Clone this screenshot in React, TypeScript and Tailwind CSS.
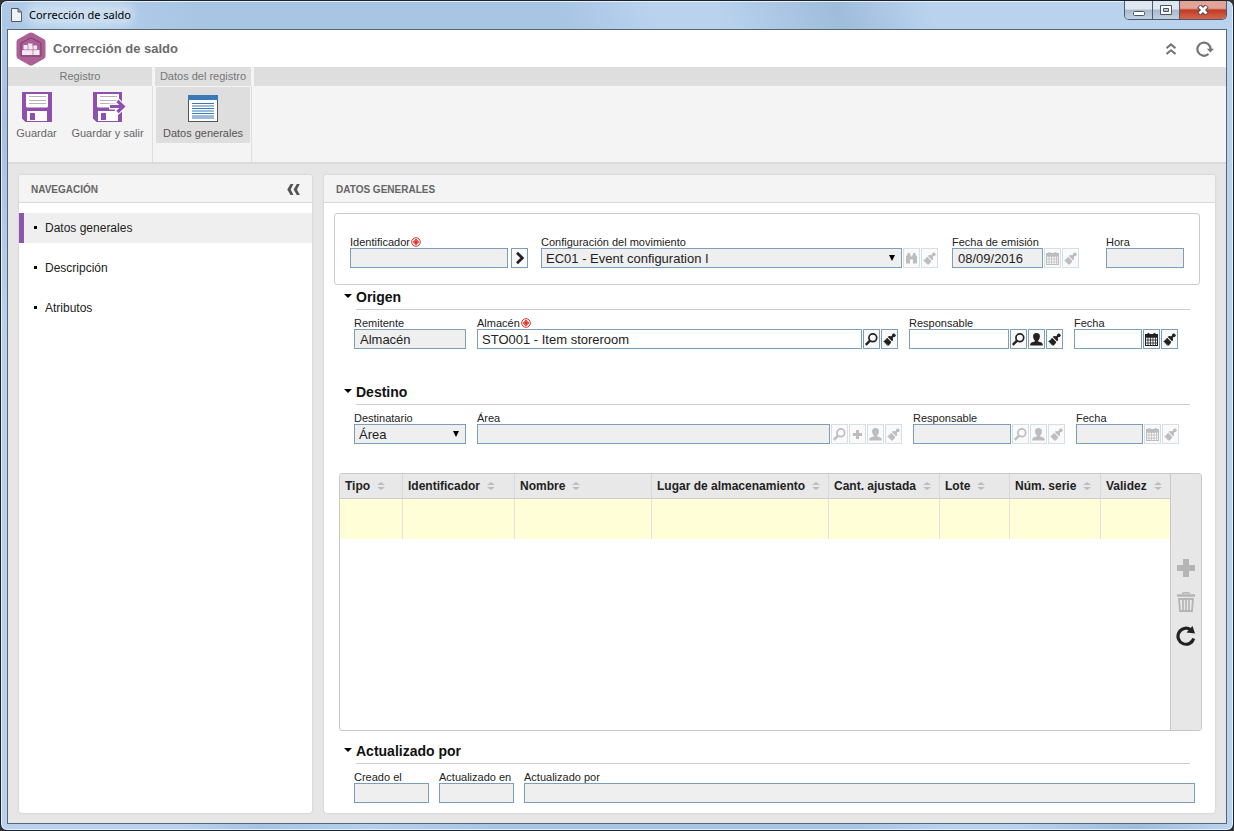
import React from 'react';

/* ---------- Icons ---------- */

function SearchIcon() {
  return (
    <svg viewBox="0 0 15 15" className="h-[15px] w-[15px] shrink-0" fill="none" stroke="currentColor">
      <circle cx="8.800" cy="5.800" r="3.900" strokeWidth="1.700" />
      <path d="M6 8.600 L1.800 12.800" strokeWidth="2.400" />
    </svg>
  );
}

function BrushIcon() {
  return (
    <svg viewBox="0 0 15 15" className="h-[15px] w-[15px] shrink-0" fill="currentColor">
      <path d="M12 1.200 L14 3.200 L12.800 5 L11.600 5 L10.800 5.900 L11.200 8.200 L10 9.200 L5.800 5 L6.800 4 L9.100 4.300 L10 3.500 L10.200 2.300 Z" />
      <path d="M5.100 5.700 L9.300 9.900 C8.600 11.600 7.400 13 5.700 14 L5.300 12.600 L4.300 12.900 L4 11.400 L2.800 11.500 L2.500 10.100 L1 9.600 C2.600 8.600 4 7.300 5.100 5.700 Z" />
    </svg>
  );
}

function UserIcon() {
  return (
    <svg viewBox="0 0 15 15" className="h-[15px] w-[15px] shrink-0" fill="currentColor">
      <path d="M7.500 1 C9.900 1 11 2.500 10.900 4.500 C10.800 6.300 10.200 7.700 9.200 8.400 V9.400 C11.800 10 13.800 10.400 13.800 13 V13.500 H1.200 V13 C1.200 10.400 3.200 10 5.800 9.400 V8.400 C4.800 7.700 4.200 6.300 4.100 4.500 C4 2.500 5.100 1 7.500 1 Z" />
    </svg>
  );
}

function CalendarIcon() {
  return (
    <svg viewBox="0 0 15 15" className="h-[15px] w-[15px] shrink-0" fill="none" stroke="currentColor">
      <rect x="1.500" y="2.500" width="12" height="11" />
      <path d="M1 3.500 H14 M1 5 H14" strokeWidth="1.400" />
      <path d="M4.500 1 V4 M10.500 1 V4" strokeWidth="1.800" />
      <path d="M4 5 V13 M6.500 5 V13 M9 5 V13 M11.500 5 V13 M1 8 H14 M1 11 H14" strokeWidth="0.800" />
    </svg>
  );
}

function BinocularsIcon() {
  return (
    <svg viewBox="0 0 15 15" className="h-[15px] w-[15px] shrink-0" fill="currentColor">
      <path d="M3.500 2 H6 V4 H6.800 V5.500 H8.200 V4 H9 V2 H11.500 V4 L13 5 V12.500 H9 V8.500 H6 V12.500 H2 V5 L3.500 4 Z" />
    </svg>
  );
}

function PlusIcon({ className }: { className: string }) {
  return (
    <svg viewBox="0 0 18 18" className={className} fill="currentColor">
      <path d="M6 0 h6 v6 h6 v6 h-6 v6 h-6 v-6 h-6 v-6 h6 Z" />
    </svg>
  );
}

function ChevronIcon() {
  return (
    <svg viewBox="0 0 10 14" className="h-3.5 w-2.5" fill="none" stroke="currentColor" strokeWidth="2.800">
      <path d="M2 1.800 L7.300 7 L2 12.200" />
    </svg>
  );
}

function RequiredIcon() {
  return (
    <svg viewBox="0 0 10 10" className="h-2.5 w-2.5">
      <circle cx="5" cy="5" r="4.300" fill="#fff" stroke="#e8281e" strokeWidth="1" />
      <path d="M5 2 V8 M2 5 H8" stroke="#e8281e" strokeWidth="1.600" />
      <path d="M3 3 L7 7 M7 3 L3 7" stroke="#e8281e" strokeWidth="0.700" />
    </svg>
  );
}

function FloppyIcon({ exit = false }: { exit?: boolean }) {
  return (
    <svg viewBox="0 0 33 30" className="h-[30px] w-[33px]">
      <path d="M0 0 H30 V30 H3.500 L0 26.500 Z" fill="#8e4fad" />
      <path d="M4 2 H26 V14 Q26 15.500 24.500 15.500 H5.500 Q4 15.500 4 14 Z" fill="#fff" />
      <path d="M7 4.500 H24 M7 8.500 H24 M7 11.500 H24" stroke="#b5b5b5" />
      <rect x="5" y="19" width="20" height="10" fill="#fff" />
      <rect x="8" y="21" width="5" height="7" fill="#8e4fad" />
      {exit && (
        <g>
          <path d="M29 0 H33 V30 H29 Z" fill="#f4f4f4" />
          <path d="M16 14.500 H26 M23.500 8.500 L30 14.500 L23.500 20.500" fill="none" stroke="#f8f8f8" strokeWidth="6" />
          <path d="M17 14.500 H30 M24.500 9 L30.200 14.500 L24.500 20" fill="none" stroke="#8e4fad" strokeWidth="3.200" />
        </g>
      )}
    </svg>
  );
}

function FormIcon() {
  return (
    <svg viewBox="0 0 30 27" className="h-[27px] w-[30px]">
      <rect x="0.500" y="0.500" width="29" height="26" fill="#fff" stroke="#555" />
      <rect width="30" height="5" fill="#3b78b8" />
      <path d="M4 8.500 H26 M4 11 H26 M4 13.500 H26 M4 16 H26 M4 18.500 H26 M4 21 H26 M4 23 H26" stroke="#3b78b8" strokeWidth="1.200" />
    </svg>
  );
}

function WarehouseIcon() {
  return (
    <svg viewBox="0 0 30 34" className="h-[34px] w-[30px]">
      <path d="M13 1 Q15 0 17 1 L28 7.300 Q29.500 8.200 29.500 10 V24 Q29.500 25.800 28 26.700 L17 33 Q15 34 13 33 L2 26.700 Q0.500 25.800 0.500 24 V10 Q0.500 8.200 2 7.300 Z" fill="#ac6096" />
      <path d="M5 24 V11 L15 5.800 L25 11 V24 Z" fill="none" stroke="#73406a" strokeWidth="1" />
      <path d="M7.500 13 h4.500 v-1.600 h4.500 v2 h4.500 v4.600 h2.500 v5 h-17.500 v-5 h1.500 Z" fill="#f3eaf1" />
      <path d="M6 17.800 H21 M17 13 V23 M12 13 V17.500" stroke="#ac6096" strokeWidth="0.700" />
    </svg>
  );
}

function TrashIcon() {
  return (
    <svg viewBox="0 0 18 20" className="h-5 w-[18px]" fill="none" stroke="currentColor">
      <path d="M5.500 2 Q5.500 0.800 7 0.800 H11 Q12.500 0.800 12.500 2" strokeWidth="1.400" />
      <path d="M0 3.500 H18" strokeWidth="2.600" />
      <path d="M2 7 L3 19 H15 L16 7 Z" strokeWidth="1.800" />
      <path d="M6 7 V18 M9 7 V18 M12 7 V18" strokeWidth="1.700" />
    </svg>
  );
}

function ReloadIcon() {
  return (
    <svg viewBox="0 0 20 20" className="h-5 w-5">
      <path d="M17.700 12.500 A8 8 0 1 1 14.500 3.600" fill="none" stroke="#222" strokeWidth="3.200" />
      <path d="M16.500 0 L19 7.500 L10.500 6.500 Z" fill="#222" />
    </svg>
  );
}

function HeaderReloadIcon() {
  return (
    <svg viewBox="0 0 18 16" className="h-4 w-[18px]">
      <path d="M12.500 13 A6.600 6.600 0 1 1 14.600 8.400" fill="none" stroke="#757575" strokeWidth="2.200" />
      <path d="M10.800 7.800 H18 L14.400 11.600 Z" fill="#757575" />
    </svg>
  );
}

/* ---------- Form parts ---------- */

type IconKind = 'search' | 'brush' | 'user' | 'calendar' | 'plus' | 'binoculars' | 'go';

const iconNames: Record<IconKind, string> = {
  search: 'Buscar',
  brush: 'Limpiar',
  user: 'Usuario',
  calendar: 'Calendario',
  plus: 'Añadir',
  binoculars: 'Ver',
  go: 'Siguiente',
};

function IconButton({ kind, off = false }: { kind: IconKind; off?: boolean }) {
  return (
    <button
      type="button"
      disabled={off}
      aria-label={iconNames[kind]}
      className={
        'flex h-5 w-[17px] shrink-0 items-center justify-center border bg-[#fafafa] ' +
        (off ? 'border-[#d5dfea] text-[#bdbdbd]' : 'border-[#7b9ebd] text-[#222]')
      }
    >
      {kind === 'search' && <SearchIcon />}
      {kind === 'brush' && <BrushIcon />}
      {kind === 'user' && <UserIcon />}
      {kind === 'calendar' && <CalendarIcon />}
      {kind === 'plus' && <PlusIcon className="h-[9px] w-[9px]" />}
      {kind === 'binoculars' && <BinocularsIcon />}
      {kind === 'go' && <ChevronIcon />}
    </button>
  );
}

interface FieldProps {
  id: string;
  label: string;
  width: string;
  value?: string;
  required?: boolean;
  readOnly?: boolean;
  select?: boolean;
  icons?: IconKind[];
  off?: boolean;
  iconGap?: string;
}

function Field({ id, label, width, value = '', required, readOnly, select, icons = [], off, iconGap = 'gap-px' }: FieldProps) {
  const grow = width === 'flex-1';
  const control = 'h-5 w-full border border-[#7b9ebd] text-[13px] text-[#222] outline-none ' + (readOnly ? 'bg-[#efefef]' : 'bg-white');
  return (
    <div className={grow ? 'min-w-0 flex-1' : 'shrink-0'}>
      <label htmlFor={id} className="flex h-3 items-center gap-px text-[11px] leading-3 whitespace-nowrap text-[#222]">
        {label}
        {required && <RequiredIcon />}
      </label>
      <div className={'flex ' + iconGap}>
        <div className={'relative ' + (grow ? 'min-w-0 flex-1' : width)}>
          {select ? (
            <>
              <select id={id} className={control + ' block appearance-none pl-1'} defaultValue={value}>
                <option>{value}</option>
              </select>
              <svg viewBox="0 0 6 6" className="pointer-events-none absolute top-[7px] right-[7px] h-1.5 w-1.5">
                <path d="M0 0 H6 L3 6 Z" fill="#000" />
              </svg>
            </>
          ) : (
            <input id={id} className={control + ' block ' + (grow ? 'px-1' : 'px-[5px]')} defaultValue={value} readOnly={readOnly} />
          )}
        </div>
        {icons.map((k, i) => (
          <IconButton key={i} kind={k} off={off} />
        ))}
      </div>
    </div>
  );
}

function SectionTitle({ children }: { children: React.ReactNode }) {
  return (
    <h2 className="mr-2.5 ml-2.5 flex h-[25px] text-sm font-bold text-[#111]">
      <button type="button" aria-label="Contraer sección" className="flex w-3 items-center pb-1">
        <svg viewBox="0 0 8 4" className="h-1 w-2">
          <path d="M0 0 H8 L4 4 Z" fill="#000" />
        </svg>
      </button>
      <span className="flex-1 border-b border-[#ccc] leading-6">{children}</span>
    </h2>
  );
}

const columns = [
  { name: 'Tipo', w: 'w-[63px]' },
  { name: 'Identificador', w: 'w-[112px]' },
  { name: 'Nombre', w: 'w-[137px]' },
  { name: 'Lugar de almacenamiento', w: 'w-[177px]' },
  { name: 'Cant. ajustada', w: 'w-[111px]' },
  { name: 'Lote', w: 'w-[70px]' },
  { name: 'Núm. serie', w: 'w-[91px]' },
  { name: 'Validez', w: 'w-[70px]' },
];

function ItemsTable() {
  return (
    <div className="mt-[29px] mr-[-2px] ml-[5px] flex h-[258px] overflow-hidden rounded-[3px] border border-[#c8c8c8]">
      <div className="min-w-0 flex-1">
        <table className="w-full table-fixed border-separate border-spacing-0">
          <thead>
            <tr className="h-[25px] bg-[#e8e8e8]">
              {columns.map((c) => (
                <th key={c.name} scope="col" className={c.w + ' border-r border-b border-r-[#d8d8d8] border-b-[#ccc] p-0 pl-[5px] text-left text-xs font-bold text-[#222] last:border-r-0'}>
                  <span className="flex items-center gap-[7px] whitespace-nowrap">
                    {c.name}
                    <svg viewBox="0 0 8 8" className="h-2 w-2 shrink-0">
                      <path d="M4 0 L8 3 H0 Z M0 5 H8 L4 8 Z" fill="#bcbcbc" />
                    </svg>
                  </span>
                </th>
              ))}
            </tr>
          </thead>
          <tbody>
            <tr className="h-10 bg-[#fffed7]">
              {columns.map((c) => (
                <td key={c.name} className="border-r border-[#e3e3e3] p-0 last:border-r-0" />
              ))}
            </tr>
          </tbody>
        </table>
      </div>
      <div className="flex w-[31px] shrink-0 flex-col items-center justify-center gap-3.5 border-l border-[#c8c8c8] bg-[#e7e7e7] text-[#b5b5b5]">
        <button type="button" aria-label="Añadir ítem" className="flex h-5 items-center"><PlusIcon className="h-[18px] w-[18px]" /></button>
        <button type="button" aria-label="Eliminar ítem"><TrashIcon /></button>
        <button type="button" aria-label="Actualizar lista"><ReloadIcon /></button>
      </div>
    </div>
  );
}

/* ---------- Window parts ---------- */

function TitleBar() {
  const base = 'flex items-center justify-center border-r border-[#4b5a6e] bg-linear-to-b from-[#dfe7f0] from-45% via-[#a9b8ca] via-50% to-[#c3d2e3]';
  return (
    <div className="flex h-7 items-start justify-between pl-1">
      <div className="flex h-7 items-center gap-[7px]">
        <svg viewBox="0 0 11 14" className="h-3.5 w-[11px]">
          <path d="M0.500 0.500 H7 L10.500 4 V13.500 H0.500 Z M7 0.500 V4 H10.500" fill="#eef3f9" stroke="#555" />
        </svg>
        <span className="rounded-full bg-white/30 font-['Noto_Sans','Open_Sans',sans-serif] text-[11px] text-black shadow-[0_0_8px_4px_rgba(255,255,255,0.3)]">Corrección de saldo</span>
      </div>
      <div className="flex h-[19px] overflow-hidden rounded-b-[5px] border border-t-0 border-[#4b5a6e]">
        <button type="button" aria-label="Minimizar" className={base + ' w-7'}>
          <svg viewBox="0 0 12 5" className="mt-1.5 h-[5px] w-3"><rect x="0.500" y="0.500" width="11" height="4" rx="1" fill="#fff" stroke="#4b5566" /></svg>
        </button>
        <button type="button" aria-label="Maximizar" className={base + ' w-[27px]'}>
          <svg viewBox="0 0 12 10" className="h-2.5 w-3"><path fillRule="evenodd" d="M0.500 0.500 H11.500 V9.500 H0.500 Z M3.500 3.500 V6.500 H8.500 V3.500 Z" fill="#fff" stroke="#4b5566" /></svg>
        </button>
        <button type="button" aria-label="Cerrar" className="flex w-[46px] items-center justify-center bg-linear-to-b from-[#e0a596] from-40% via-[#c03a26] via-50% to-[#d5664a]">
          <svg viewBox="0 0 12 10" className="h-2.5 w-3">
            <path d="M2 1 L10 9 M10 1 L2 9" stroke="#5a4550" strokeWidth="5" />
            <path d="M2.500 1.500 L9.500 8.500 M9.500 1.500 L2.500 8.500" stroke="#fff" strokeWidth="2.800" />
          </svg>
        </button>
      </div>
    </div>
  );
}

function AppHeader() {
  return (
    <header className="flex h-[37px] items-center justify-between bg-white pr-3 pl-2">
      <div className="flex items-center gap-[7px]">
        <WarehouseIcon />
        <h1 className="text-[13px] font-bold text-[#6b6b6b]">Corrección de saldo</h1>
      </div>
      <div className="flex items-center gap-5">
        <button type="button" aria-label="Contraer">
          <svg viewBox="0 0 10 12" className="h-3 w-2.5" fill="none" stroke="#757575" strokeWidth="2">
            <path d="M0.500 5.200 L5 1.400 L9.500 5.200 M0.500 11 L5 7.200 L9.500 11" />
          </svg>
        </button>
        <button type="button" aria-label="Actualizar"><HeaderReloadIcon /></button>
      </div>
    </header>
  );
}

function Ribbon() {
  const head = 'mr-px h-[19px] bg-[#dedede] text-center text-[11px] leading-[18px] text-[#777]';
  const item = 'flex flex-col items-center gap-[3px] text-[11px] leading-4 whitespace-nowrap';
  return (
    <div className="flex h-[97px] border-b-2 border-[#dadada] bg-[#f4f4f4]">
      <section className="flex w-[145px] shrink-0 flex-col">
        <h2 className={head}>Registro</h2>
        <div className="flex flex-1 items-start gap-3.5 border-r border-[#dedede] pt-1.5 pl-2">
          <button type="button" className={item + ' w-[41px] text-[#666]'}><span className="pl-[3px]"><FloppyIcon /></span><span>Guardar</span></button>
          <button type="button" className={item + ' w-[73px] text-[#666]'}><span className="pl-[3px]"><FloppyIcon exit /></span><span>Guardar y salir</span></button>
        </div>
      </section>
      <section className="ml-0.5 flex w-[97px] shrink-0 flex-col">
        <h2 className={head}>Datos del registro</h2>
        <div className="flex flex-1 items-start border-r border-[#dedede] px-px pt-px">
          <button type="button" className={item + ' h-14 w-full bg-[#dedede] pt-2 text-[#555]'}><FormIcon /><span>Datos generales</span></button>
        </div>
      </section>
      <div className="ml-0.5 h-[19px] flex-1 bg-[#dedede]" />
    </div>
  );
}

function NavPanel() {
  const link = 'flex h-[30px] items-center gap-2 pl-[10px] text-xs text-[#222] border-l-[5px]';
  const dot = 'mb-0.5 h-[3px] w-[3px] bg-black';
  return (
    <nav className="w-[293px] shrink-0 rounded-[3px] bg-white shadow-[0_0_2px_#bbb]">
      <div className="flex h-7 items-center justify-between rounded-t-[3px] border-b border-[#d8d8d8] bg-[#f4f4f4] px-3 pt-0.5">
        <h2 className="text-[10px] font-bold text-[#666]">NAVEGACIÓN</h2>
        <button type="button" aria-label="Contraer navegación">
          <svg viewBox="0 0 13 11" className="h-[11px] w-[13px]" fill="#555">
            <path d="M3.500 0 H6.500 L3.700 5.500 L6.500 11 H3.500 L0.300 5.500 Z M9.800 0 H12.800 L10 5.500 L12.800 11 H9.800 L6.600 5.500 Z" />
          </svg>
        </button>
      </div>
      <ul className="flex flex-col gap-2.5 pt-2.5">
        <li><a href="#datos" className={link + ' border-[#8e55ae] bg-[#efefef]'}><span className={dot} />Datos generales</a></li>
        <li><a href="#descripcion" className={link + ' border-transparent'}><span className={dot} />Descripción</a></li>
        <li><a href="#atributos" className={link + ' border-transparent'}><span className={dot} />Atributos</a></li>
      </ul>
    </nav>
  );
}

function MainPanel() {
  return (
    <main className="min-w-0 flex-1 rounded-[3px] bg-white shadow-[0_0_2px_#bbb]">
      <div className="flex h-7 items-center rounded-t-[3px] border-b border-[#d8d8d8] bg-[#f4f4f4] px-3 pt-0.5">
        <h2 className="text-[10px] font-bold text-[#666]">DATOS GENERALES</h2>
      </div>
      <form className="pt-2.5 pr-[15px] pb-2.5 pl-2.5">
        <div className="flex rounded-[3px] border border-[#ccc] px-[15px] pt-[22px] pb-4">
          <Field id="ident" label="Identificador" width="w-[158px]" required readOnly icons={['go']} iconGap="gap-[3px]" />
          <div className="ml-[13px] flex min-w-0 flex-1">
            <Field id="config" label="Configuración del movimiento" width="flex-1" value="EC01 - Event configuration I" readOnly select icons={['binoculars', 'brush']} off />
          </div>
          <div className="ml-3.5">
            <Field id="emision" label="Fecha de emisión" width="w-[91px]" value="08/09/2016" readOnly icons={['calendar', 'brush']} off />
          </div>
          <div className="ml-[27px]">
            <Field id="hora" label="Hora" width="w-[78px]" readOnly />
          </div>
        </div>

        <SectionTitle>Origen</SectionTitle>
        <div className="mr-[22px] ml-5 flex gap-[11px] pt-[7px]">
          <Field id="remitente" label="Remitente" width="w-[112px]" value="Almacén" readOnly />
          <Field id="almacen" label="Almacén" width="flex-1" value="STO001 - Item storeroom" required icons={['search', 'brush']} />
          <Field id="resp1" label="Responsable" width="w-[100px]" icons={['search', 'user', 'brush']} />
          <Field id="fecha1" label="Fecha" width="w-[68px]" icons={['calendar', 'brush']} />
        </div>

        <div className="pt-[31px]">
          <SectionTitle>Destino</SectionTitle>
        </div>
        <div className="mr-[21px] ml-5 flex gap-[11px] pt-[7px]">
          <Field id="destinatario" label="Destinatario" width="w-[112px]" value="Área" readOnly select />
          <Field id="area" label="Área" width="flex-1" readOnly icons={['search', 'plus', 'user', 'brush']} off />
          <Field id="resp2" label="Responsable" width="w-[98px]" readOnly icons={['search', 'user', 'brush']} off />
          <Field id="fecha2" label="Fecha" width="w-[67px]" readOnly icons={['calendar', 'brush']} off />
        </div>

        <ItemsTable />

        <div className="pt-2">
          <SectionTitle>Actualizado por</SectionTitle>
        </div>
        <div className="mr-[5px] ml-5 flex gap-2.5 pt-[7px]">
          <Field id="creado" label="Creado el" width="w-[75px]" readOnly />
          <Field id="actualizado" label="Actualizado en" width="w-[75px]" readOnly />
          <Field id="por" label="Actualizado por" width="flex-1" readOnly />
        </div>
      </form>
    </main>
  );
}

export default function App() {
  return (
    <div className="min-h-screen bg-[#333] font-['Liberation_Sans',Arial,sans-serif]">
      <div className="flex min-h-screen flex-col rounded-[7px] border border-[#1c222c] bg-[linear-gradient(70deg,#b9d1ec_0%,#b9d1ec_12%,#a6c3e2_17%,#b4d0ec_24%,#a9c5e4_32%,#a9c5e4_56%,#b9d3ef_62%,#b9d3ef_66%,#9fbcdb_74%,#b9d3ef_80%,#b9d3ef_100%)] px-1.5 pb-1.5 shadow-[inset_0_0_0_1px_#e6f0fa]">
        <TitleBar />
        <div className="flex flex-1 flex-col border border-[#55657a] bg-[#e6e6e6]">
          <AppHeader />
          <Ribbon />
          <div className="flex flex-1 gap-3 pt-[11px] pr-[11px] pb-2.5 pl-[11px]">
            <NavPanel />
            <MainPanel />
          </div>
        </div>
      </div>
    </div>
  );
}
